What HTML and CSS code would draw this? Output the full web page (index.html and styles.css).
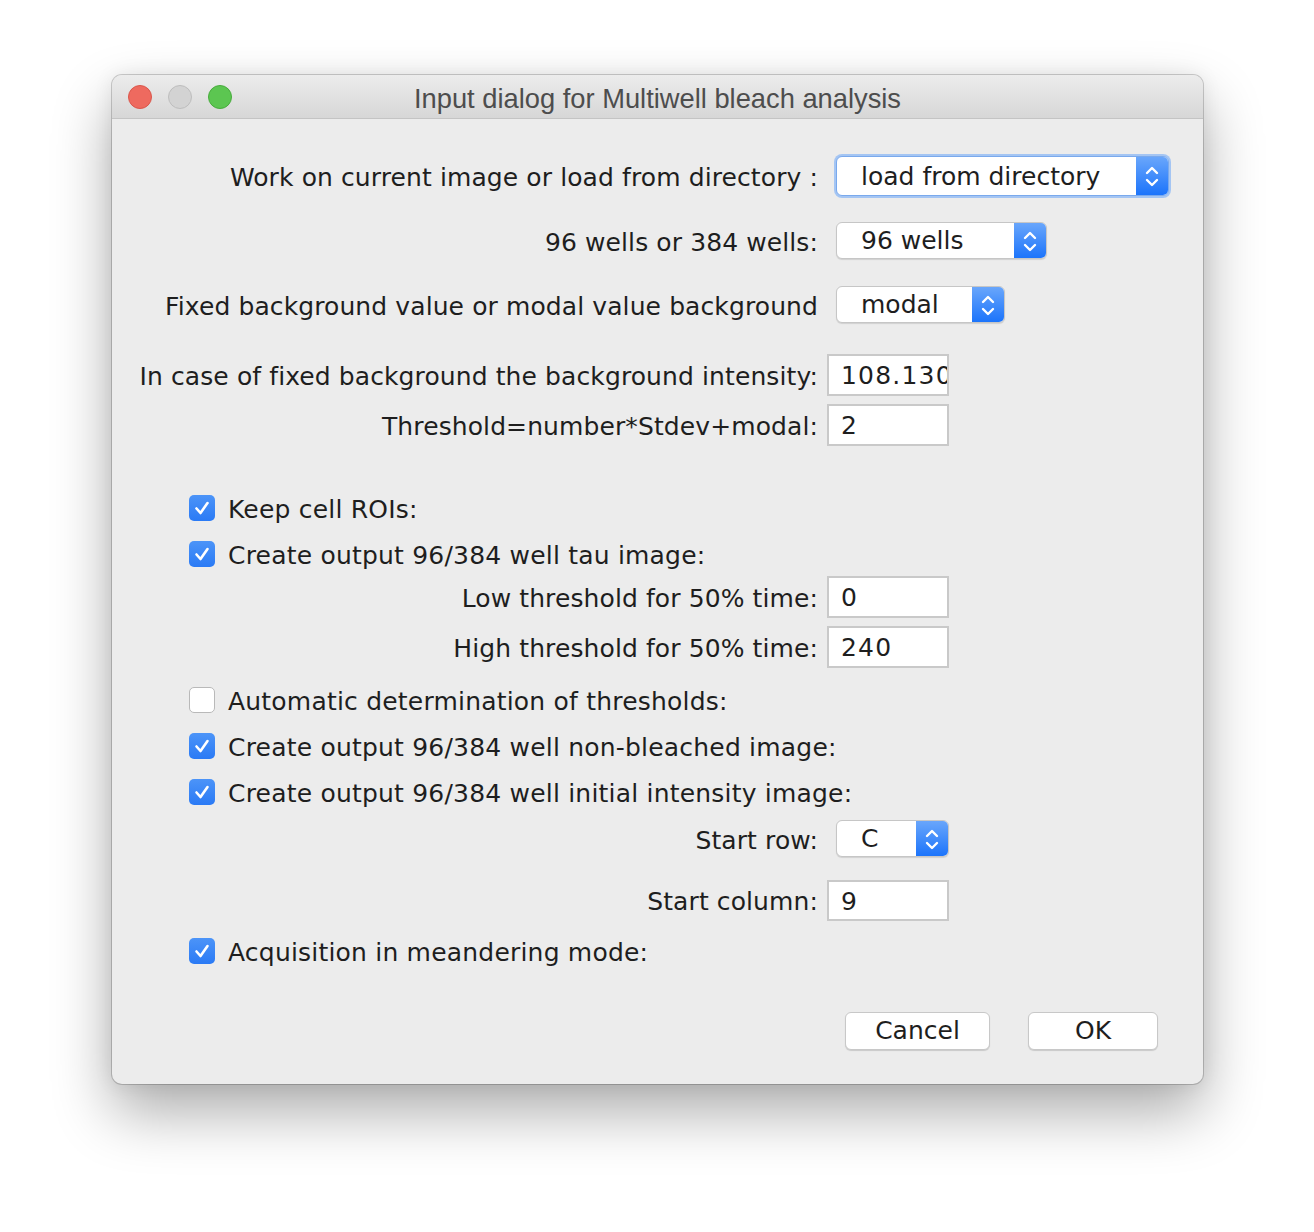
FILE: index.html
```html
<!DOCTYPE html>
<html>
<head>
<meta charset="utf-8">
<link rel="stylesheet" href="styles.css">
</head>
<body>
<div class="window">
  <div class="titlebar">
    <div class="lights">
      <span class="light red"></span>
      <span class="light gray"></span>
      <span class="light green"></span>
    </div>
    <div class="title">Input dialog for Multiwell bleach analysis</div>
  </div>
  <div class="content">
    <div class="row sel-row first">
      <div class="label">Work on current image or load from directory :</div>
      <div class="select focus wide"><span class="sel-text">load from directory</span><span class="arrows"><svg viewBox="0 0 32 38" width="32" height="38"><path d="M11 16 L16 11 L21 16 M11 23 L16 28 L21 23" fill="none" stroke="#fff" stroke-width="2.4" stroke-linecap="round" stroke-linejoin="round"/></svg></span></div>
    </div>
    <div class="row sel-row">
      <div class="label">96 wells or 384 wells:</div>
      <div class="select w96"><span class="sel-text">96 wells</span><span class="arrows"><svg viewBox="0 0 32 38" width="32" height="38"><path d="M11 16 L16 11 L21 16 M11 23 L16 28 L21 23" fill="none" stroke="#fff" stroke-width="2.4" stroke-linecap="round" stroke-linejoin="round"/></svg></span></div>
    </div>
    <div class="row sel-row">
      <div class="label">Fixed background value or modal value background</div>
      <div class="select wmodal"><span class="sel-text">modal</span><span class="arrows"><svg viewBox="0 0 32 38" width="32" height="38"><path d="M11 16 L16 11 L21 16 M11 23 L16 28 L21 23" fill="none" stroke="#fff" stroke-width="2.4" stroke-linecap="round" stroke-linejoin="round"/></svg></span></div>
    </div>
    <div class="row field-row after-sel">
      <div class="label">In case of fixed background the background intensity:</div>
      <div class="field">108.130</div>
    </div>
    <div class="row field-row">
      <div class="label">Threshold=number*Stdev+modal:</div>
      <div class="field">2</div>
    </div>
    <div class="check-row after-field">
      <span class="box checked"><svg viewBox="0 0 26 26" width="26" height="26"><path d="M7.5 13.5 L11.5 18 L18.5 8" fill="none" stroke="#fff" stroke-width="2.6" stroke-linecap="round" stroke-linejoin="round"/></svg></span>
      <span class="check-label">Keep cell ROIs:</span>
    </div>
    <div class="check-row">
      <span class="box checked"><svg viewBox="0 0 26 26" width="26" height="26"><path d="M7.5 13.5 L11.5 18 L18.5 8" fill="none" stroke="#fff" stroke-width="2.6" stroke-linecap="round" stroke-linejoin="round"/></svg></span>
      <span class="check-label">Create output 96/384 well tau image:</span>
    </div>
    <div class="row field-row after-check">
      <div class="label">Low threshold for 50% time:</div>
      <div class="field">0</div>
    </div>
    <div class="row field-row">
      <div class="label">High threshold for 50% time:</div>
      <div class="field">240</div>
    </div>
    <div class="check-row after-field2">
      <span class="box"></span>
      <span class="check-label">Automatic determination of thresholds:</span>
    </div>
    <div class="check-row">
      <span class="box checked"><svg viewBox="0 0 26 26" width="26" height="26"><path d="M7.5 13.5 L11.5 18 L18.5 8" fill="none" stroke="#fff" stroke-width="2.6" stroke-linecap="round" stroke-linejoin="round"/></svg></span>
      <span class="check-label">Create output 96/384 well non-bleached image:</span>
    </div>
    <div class="check-row">
      <span class="box checked"><svg viewBox="0 0 26 26" width="26" height="26"><path d="M7.5 13.5 L11.5 18 L18.5 8" fill="none" stroke="#fff" stroke-width="2.6" stroke-linecap="round" stroke-linejoin="round"/></svg></span>
      <span class="check-label">Create output 96/384 well initial intensity image:</span>
    </div>
    <div class="row sel-row start-row">
      <div class="label">Start row:</div>
      <div class="select wc"><span class="sel-text">C</span><span class="arrows"><svg viewBox="0 0 32 38" width="32" height="38"><path d="M11 16 L16 11 L21 16 M11 23 L16 28 L21 23" fill="none" stroke="#fff" stroke-width="2.4" stroke-linecap="round" stroke-linejoin="round"/></svg></span></div>
    </div>
    <div class="row field-row start-col">
      <div class="label">Start column:</div>
      <div class="field">9</div>
    </div>
    <div class="check-row after-col">
      <span class="box checked"><svg viewBox="0 0 26 26" width="26" height="26"><path d="M7.5 13.5 L11.5 18 L18.5 8" fill="none" stroke="#fff" stroke-width="2.6" stroke-linecap="round" stroke-linejoin="round"/></svg></span>
      <span class="check-label">Acquisition in meandering mode:</span>
    </div>
    <div class="buttons">
      <div class="button cancel">Cancel</div>
      <div class="button ok">OK</div>
    </div>
  </div>
</div>
</body>
</html>
```
FILE: styles.css
```css
html, body {
  margin: 0;
  padding: 0;
  background: #ffffff;
}
body {
  width: 1314px;
  height: 1232px;
  overflow: hidden;
  font-family: "DejaVu Sans", "Liberation Sans", sans-serif;
  color: #1e1e1e;
}
.window {
  margin: 75px 0 0 112px;
  width: 1091px;
  height: 1009px;
  border-radius: 10px;
  background: #ececec;
  box-shadow: 0 0 0 1px rgba(0,0,0,0.18), 0 28px 60px rgba(0,0,0,0.33), 0 0 20px rgba(0,0,0,0.08);
  overflow: hidden;
}
.titlebar {
  height: 43px;
  border-bottom: 1px solid #c4c4c4;
  background: linear-gradient(#ececec, #d7d7d7);
  display: flex;
  align-items: center;
  position: relative;
}
.lights {
  display: flex;
  gap: 16px;
  padding-left: 16px;
}
.light {
  width: 22px;
  height: 22px;
  border-radius: 50%;
  border: 1px solid transparent;
}
.light.red { background: #ee6a5f; border-color: #d9574c; }
.light.gray { background: #d3d3d3; border-color: #bdbdbd; }
.light.green { background: #5cc651; border-color: #48ab3d; }
.title {
  position: absolute;
  left: 0;
  right: 0;
  top: 0;
  line-height: 48px;
  text-align: center;
  font-family: "Liberation Sans", "Inter", sans-serif;
  font-size: 27.3px;
  color: #4d4d4d;
}
.content {
  display: flex;
  flex-direction: column;
  padding-top: 37px;
}
.row {
  display: flex;
  align-items: center;
}
.label {
  width: 706px;
  flex: none;
  text-align: right;
  font-size: 25px;
  white-space: nowrap;
  letter-spacing: 0.1px;
  padding-top: 3px;
}
.sel-row { height: 39px; margin-top: 25px; }
.sel-row.first { height: 40px; margin-top: 0; }
.select {
  margin-left: 18px;
  height: 37px;
  box-sizing: border-box;
  background: #fff;
  border: 1px solid #c6c6c6;
  border-radius: 6px;
  box-shadow: 0 1px 1px rgba(0,0,0,0.12);
  display: flex;
  align-items: center;
  overflow: hidden;
  font-size: 25px;
}
.select.focus {
  height: 40px;
  border-color: #7aa9ec;
  box-shadow: 0 0 0 2px #a4c5f3;
}
.select.wide { width: 333px; }
.select.w96 { width: 211px; }
.select.wmodal { width: 169px; }
.select.wc { width: 113px; }
.sel-text {
  flex: 1;
  padding-left: 24px;
  white-space: nowrap;
}
.arrows {
  width: 32px;
  align-self: stretch;
  background: linear-gradient(#69a6fb, #1c74fb);
  display: flex;
  align-items: center;
  justify-content: center;
}
.field-row { height: 42px; margin-top: 8px; }
.field-row.after-sel { margin-top: 30px; }
.field-row.after-check { margin-top: 9px; }
.field {
  margin-left: 9px;
  width: 122px;
  height: 42px;
  box-sizing: border-box;
  background: #fff;
  border: 2px solid #c9c9c9;
  padding-left: 12px;
  font-size: 25px;
  letter-spacing: 1.2px;
  line-height: 40px;
  overflow: hidden;
  white-space: nowrap;
}
.check-row {
  display: flex;
  align-items: center;
  height: 26px;
  margin-top: 20px;
  padding-left: 77px;
}
.check-row.after-field { margin-top: 49px; }
.check-row.after-field2 { margin-top: 19px; }
.check-row.after-col { margin-top: 18px; }
.box {
  width: 26px;
  height: 26px;
  box-sizing: border-box;
  border-radius: 5px;
  background: #fff;
  border: 1px solid #b9b9b9;
  flex: none;
  display: flex;
}
.box.checked {
  border: none;
  background: linear-gradient(#4c94f8, #2a7af5);
}
.check-label {
  margin-left: 13px;
  font-size: 25px;
  letter-spacing: 0.2px;
  white-space: nowrap;
  padding-top: 2px;
}
.start-row { margin-top: 14px; }
.start-col { margin-top: 22px; height: 40px; }
.start-col .field { height: 41px; line-height: 39px; }
.buttons {
  display: flex;
  justify-content: flex-end;
  gap: 38px;
  padding-right: 45px;
  margin-top: 48px;
}
.button {
  height: 38px;
  box-sizing: border-box;
  background: #fff;
  border: 1px solid #c8c8c8;
  border-radius: 6px;
  box-shadow: 0 1px 1px rgba(0,0,0,0.15);
  text-align: center;
  font-size: 25px;
  line-height: 36px;
}
.button.cancel { width: 145px; }
.button.ok { width: 130px; }
```
